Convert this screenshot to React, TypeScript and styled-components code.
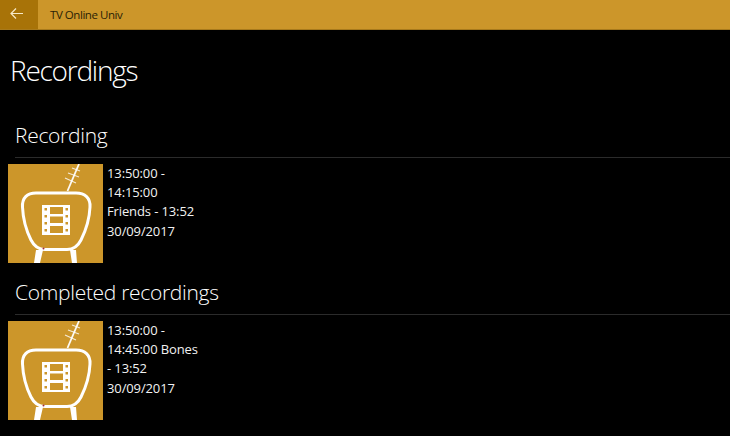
import styled, { createGlobalStyle } from 'styled-components';
import { ReactElement } from 'react';

const GlobalStyle = createGlobalStyle`
  html, body {
    margin: 0;
    padding: 0;
    height: 100%;
    background: #000;
    overflow: hidden;
  }
`;

const Page = styled.div`
  width: 730px;
  height: 436px;
  background: #000;
  color: #fff;
  font-family: 'Open Sans', 'Noto Sans', sans-serif;
  overflow: hidden;
`;

const TitleBar = styled.header`
  display: flex;
  align-items: center;
  height: 29px;
  background: #cc962a;
  border-bottom: 1px solid #a87a1c;
`;

const BackButton = styled.button`
  display: flex;
  align-items: center;
  justify-content: center;
  width: 38px;
  height: 29px;
  padding: 0 6px 2px 0;
  border: 0;
  background: #a87308;
`;

const AppName = styled.span`
  margin-left: 12px;
  margin-bottom: 1px;
  font-size: 11.5px;
  letter-spacing: -0.45px;
  color: #2a1e05;
`;

const Heading = styled.h1`
  margin: 0;
  padding: 21px 0 0 10px;
  height: 69px;
  font-size: 28px;
  line-height: 38px;
  font-weight: 300;
  letter-spacing: -1.25px;
`;

const Section = styled.section<{ $top: number }>`
  margin-top: ${(props) => props.$top}px;
`;

const SectionTitle = styled.h2`
  margin: 0 0 0 15px;
  font-size: 21px;
  line-height: 30px;
  font-weight: 300;
  letter-spacing: -0.3px;
`;

const Rule = styled.div`
  height: 1px;
  margin: 7px 0 6px 15px;
  background: #2b2b2b;
`;

const Row = styled.div`
  display: flex;
  padding-left: 8px;
`;

const Tile = styled.div`
  width: 95px;
  height: 99px;
  flex: none;
  background: #cc962a;
`;

const Details = styled.div`
  width: 100px;
  margin-left: 4px;
  font-size: 13px;
  line-height: 19.2px;
  letter-spacing: -0.12px;
  color: #f2f2f2;
`;

function TvIcon(): ReactElement {
  const holes = [44, 51, 58, 65];
  return (
    <svg width="95" height="99" viewBox="0 0 95 99" fill="none" stroke="#fff">
      <path d="M59.5 27 L71 0" strokeWidth="1.8" opacity="0.95" />
      <path d="M64 4 L72 7 M60 9 L71 13 M57 14 L68 19" strokeWidth="1.2" opacity="0.8" />
      <path
        d="M28 29 H68 C77 29 82.5 34 82 43 C81.5 55 77 68 73 76 C70 82 66 85.5 59 85.5 H37 C30 85.5 26 82 23 76 C19 68 15 55 14.5 43 C14 34 19 29 28 29 Z"
        strokeWidth="3"
      />
      <path d="M28 86 L26 99 H32 L35 86 Z M62 86 L64 99 H69 L68 86 Z" fill="#fff" stroke="none" />
      <rect x="34" y="41" width="28" height="30" fill="#fff" stroke="none" />
      <g fill="#cc962a" stroke="none">
        <rect x="42" y="43" width="13" height="7" />
        <rect x="42" y="52.5" width="13" height="6.5" />
        <rect x="42" y="62" width="13" height="7" />
        {holes.map((y) => (
          <rect key={`l${y}`} x="36.5" y={y} width="2.5" height="2.5" />
        ))}
        {holes.map((y) => (
          <rect key={`r${y}`} x="57.5" y={y} width="2.5" height="2.5" />
        ))}
      </g>
      <circle cx="35.5" cy="84.5" r="1" fill="#a02a3a" stroke="none" />
    </svg>
  );
}

const recordings = [
  {
    title: 'Recording',
    top: 0,
    lines: ['13:50:00 -', '14:15:00', 'Friends - 13:52', '30/09/2017'],
  },
  {
    title: 'Completed recordings',
    top: 14,
    lines: ['13:50:00 -', '14:45:00 Bones', '- 13:52', '30/09/2017'],
  },
];

export default function App(): ReactElement {
  return (
    <Page>
      <GlobalStyle />
      <TitleBar>
        <BackButton aria-label="Back">
          <svg width="13" height="11" viewBox="0 0 13 11" fill="none" stroke="#f7e9c8" strokeWidth="1.2">
            <path d="M13 5.5 H1 M6 .5 L1 5.5 L6 10.5" />
          </svg>
        </BackButton>
        <AppName>TV Online Univ</AppName>
      </TitleBar>
      <Heading>Recordings</Heading>
      {recordings.map((group) => (
        <Section key={group.title} $top={group.top}>
          <SectionTitle>{group.title}</SectionTitle>
          <Rule />
          <Row>
            <Tile>
              <TvIcon />
            </Tile>
            <Details>
              {group.lines.map((line) => (
                <div key={line}>{line}</div>
              ))}
            </Details>
          </Row>
        </Section>
      ))}
    </Page>
  );
}
